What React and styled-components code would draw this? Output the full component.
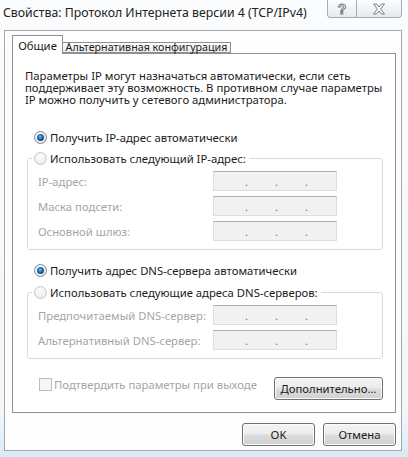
import React from 'react';
import styled, { createGlobalStyle } from 'styled-components';

const GlobalStyle = createGlobalStyle`
  html, body {
    margin: 0;
    padding: 0;
  }
  body {
    width: 408px;
    height: 457px;
    overflow: hidden;
    font-family: "Noto Sans", "Liberation Sans", sans-serif;
    font-size: 11.3px;
    color: #1b1b1b;
  }
`;

const Window = styled.div`
  width: 408px;
  height: 457px;
  box-sizing: border-box;
  display: flex;
  flex-direction: column;
  background: linear-gradient(180deg, #fbfcfd 0%, #f3f7fa 90%, #d6ebf6 100%);
`;

const TitleBar = styled.div`
  height: 30px;
  flex: none;
  display: flex;
  align-items: flex-start;
  justify-content: space-between;
  padding: 0 6px 0 3px;
`;

const Title = styled.div`
  margin-top: 6px;
  font-size: 12.3px;
  line-height: 14px;
  color: #222;
  white-space: nowrap;
`;

const CaptionButtons = styled.div`
  display: flex;
`;

const CaptionButton = styled.div`
  width: ${(p) => p.$w}px;
  height: 18px;
  box-sizing: border-box;
  display: flex;
  align-items: center;
  justify-content: center;
  border: 1px solid #a4adb7;
  border-top: none;
  background: linear-gradient(180deg, #fdfdfe 0%, #f1f4f7 50%, #e6ebf0 100%);
  border-radius: ${(p) => (p.$first ? '0 0 0 4px' : '0 0 4px 0')};
  margin-left: ${(p) => (p.$first ? 0 : -1)}px;
`;

const Client = styled.div`
  height: 421px;
  margin: 0 6px 0 4px;
  box-sizing: border-box;
  border: 1px solid #a7a7a7;
  background: #fdfdfd;
  padding: 4px 5px 0 7px;
  display: flex;
  flex-direction: column;
`;

const TabStrip = styled.div`
  height: 18px;
  display: flex;
  align-items: flex-end;
`;

const Tab = styled.div`
  box-sizing: border-box;
  width: ${(p) => p.$w}px;
  height: ${(p) => (p.$active ? 19 : 11)}px;
  margin-bottom: ${(p) => (p.$active ? -1 : 0)}px;
  position: relative;
  z-index: ${(p) => (p.$active ? 1 : 0)};
  display: flex;
  align-items: center;
  justify-content: center;
  white-space: nowrap;
  font-size: ${(p) => (p.$active ? 11.3 : 10.7)}px;
  border: 1px solid #8c8f96;
  border-bottom: ${(p) => (p.$active ? 'none' : '1px solid #8c8f96')};
  border-left: ${(p) => (p.$active ? '1px solid #8c8f96' : 'none')};
  background: ${(p) => (p.$active ? '#ffffff' : 'linear-gradient(180deg, #fdfdfd, #ececec)')};
  line-height: 11px;
  padding-top: ${(p) => (p.$active ? 1 : 0)}px;
  color: #1b1b1b;
`;

const TabPage = styled.div`
  height: 360px;
  box-sizing: border-box;
  border: 1px solid #8c8f96;
  background: #ffffff;
  padding: 16px 12px 0 12px;
  display: flex;
  flex-direction: column;
`;

const Description = styled.p`
  margin: 0;
  line-height: 12px;
  white-space: nowrap;
`;

const RadioRow = styled.div`
  display: flex;
  align-items: center;
  height: 16px;
  margin-top: ${(p) => p.$mt || 0}px;
  margin-left: ${(p) => (p.$inLegend ? 0 : 9)}px;
  gap: 3px;
  white-space: nowrap;
`;

const RadioDot = styled.span`
  width: 13px;
  height: 13px;
  flex: none;
  box-sizing: border-box;
  border-radius: 50%;
  border: 1px solid ${(p) => (p.$checked ? '#7d8791' : '#c3c6c9')};
  background: ${(p) =>
    p.$checked
      ? 'radial-gradient(circle at 40% 35%, #ffffff, #dfe3e7)'
      : 'radial-gradient(circle at 40% 35%, #fbfbfb, #eaeaea)'};
  display: flex;
  align-items: center;
  justify-content: center;

  &::after {
    content: '';
    display: ${(p) => (p.$checked ? 'block' : 'none')};
    width: 7px;
    height: 7px;
    border-radius: 50%;
    background: radial-gradient(circle at 45% 40%, #6ec3ea 0%, #1e62a3 45%, #0c2d57 100%);
  }
`;

const GroupBox = styled.fieldset`
  margin: ${(p) => p.$mt}px 0 0 2px;
  padding: 0 0 8px 0;
  min-width: 0;
  border: 1px solid #d6dde2;
  border-radius: 3px;
`;

const Legend = styled.legend`
  margin-left: 4px;
  padding: 0 3px 0 2px;
  height: 16px;
`;

const FieldRow = styled.div`
  display: flex;
  align-items: center;
  height: 20px;
  margin-top: 5px;
  padding-left: 10px;
`;

const FieldLabel = styled.span`
  width: 175px;
  flex: none;
  color: #a5a5a5;
  white-space: nowrap;
`;

const IpBox = styled.div`
  width: 124px;
  height: 20px;
  box-sizing: border-box;
  border: 1px solid #dadde1;
  border-top-color: #abafb3;
  background: #f1f1f1;
  display: flex;
  align-items: center;
  padding-left: 4px;
  color: #777;
`;

const Octet = styled.span`
  width: 27px;
  flex: none;
`;

const Dot = styled.span`
  width: 3px;
  text-align: center;
  flex: none;
`;

const BottomRow = styled.div`
  display: flex;
  justify-content: space-between;
  align-items: flex-start;
  margin-top: 18px;
  padding-left: 14px;
`;

const CheckLabel = styled.div`
  display: flex;
  align-items: center;
  gap: 2px;
  height: 14px;
  color: #a5a5a5;
  white-space: nowrap;
`;

const CheckBox = styled.span`
  width: 13px;
  height: 13px;
  box-sizing: border-box;
  border: 1px solid #bdbdbd;
  background: #f6f6f6;
  flex: none;
`;

const Button = styled.div`
  width: ${(p) => p.$w}px;
  height: 23px;
  box-sizing: border-box;
  border: 1px solid #707070;
  border-radius: 3px;
  box-shadow: inset 0 0 0 1px #fbfbfb;
  background: linear-gradient(180deg, #f4f4f4 0%, #ececec 48%, #dddddd 52%, #d0d0d0 100%);
  display: flex;
  align-items: center;
  justify-content: center;
  color: #1b1b1b;
  white-space: nowrap;
`;

const ButtonRow = styled.div`
  display: flex;
  justify-content: flex-end;
  gap: 8px;
  margin-top: 10px;
`;

const HelpIcon = () => (
  <svg width="14" height="14" viewBox="0 0 14 14">
    <text
      x="7"
      y="12"
      textAnchor="middle"
      fontFamily="Liberation Sans, sans-serif"
      fontWeight="bold"
      fontSize="14"
      fill="#fafafa"
      stroke="#6e7378"
      strokeWidth="0.9"
    >
      ?
    </text>
  </svg>
);

const CloseIcon = () => (
  <svg width="14" height="12" viewBox="0 0 14 12">
    <path
      d="M1.5 1 H4.5 L7 4 L9.5 1 H12.5 L8.6 6 L12.5 11 H9.5 L7 8 L4.5 11 H1.5 L5.4 6 Z"
      fill="#fafafa"
      stroke="#6e7378"
      strokeWidth="0.9"
      strokeLinejoin="round"
    />
  </svg>
);

const IpField = ({ label }) => (
  <FieldRow>
    <FieldLabel>{label}</FieldLabel>
    <IpBox>
      <Octet />
      <Dot>.</Dot>
      <Octet />
      <Dot>.</Dot>
      <Octet />
      <Dot>.</Dot>
    </IpBox>
  </FieldRow>
);

const Radio = ({ checked, children, ...props }) => (
  <RadioRow {...props}>
    <RadioDot $checked={checked} />
    <span>{children}</span>
  </RadioRow>
);

export default function App() {
  return (
    <>
      <GlobalStyle />
      <Window>
        <TitleBar>
          <Title>Свойства: Протокол Интернета версии 4 (TCP/IPv4)</Title>
          <CaptionButtons>
            <CaptionButton $w={30} $first>
              <HelpIcon />
            </CaptionButton>
            <CaptionButton $w={46}>
              <CloseIcon />
            </CaptionButton>
          </CaptionButtons>
        </TitleBar>
        <Client>
          <TabStrip>
            <Tab $active $w={51}>Общие</Tab>
            <Tab $w={168}>Альтернативная конфигурация</Tab>
          </TabStrip>
          <TabPage>
            <Description>
              Параметры IP могут назначаться автоматически, если сеть
              <br />
              поддерживает эту возможность. В противном случае параметры
              <br />
              IP можно получить у сетевого администратора.
            </Description>

            <Radio checked $mt={23}>
              Получить IP-адрес автоматически
            </Radio>
            <GroupBox $mt={5}>
              <Legend>
                <Radio $inLegend>Использовать следующий IP-адрес:</Radio>
              </Legend>
              <IpField label="IP-адрес:" />
              <IpField label="Маска подсети:" />
              <IpField label="Основной шлюз:" />
            </GroupBox>

            <Radio checked $mt={12}>
              Получить адрес DNS-сервера автоматически
            </Radio>
            <GroupBox $mt={6}>
              <Legend>
                <Radio $inLegend>Использовать следующие адреса DNS-серверов:</Radio>
              </Legend>
              <IpField label="Предпочитаемый DNS-сервер:" />
              <IpField label="Альтернативный DNS-сервер:" />
            </GroupBox>

            <BottomRow>
              <CheckLabel>
                <CheckBox />
                Подтвердить параметры при выходе
              </CheckLabel>
              <Button $w={109}>Дополнительно...</Button>
            </BottomRow>
          </TabPage>
          <ButtonRow>
            <Button $w={73}>OK</Button>
            <Button $w={73}>Отмена</Button>
          </ButtonRow>
        </Client>
      </Window>
    </>
  );
}
